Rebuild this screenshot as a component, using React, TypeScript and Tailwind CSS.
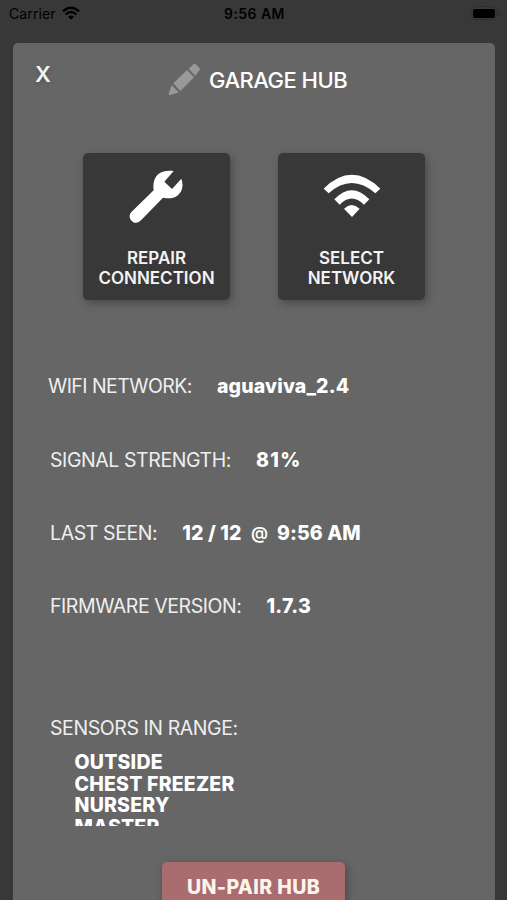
import type { ReactNode } from "react";

function StatusBar() {
  return (
    <header className="flex h-[27px] items-center justify-between pl-[9px] pr-[7px] text-[14px] leading-[18px] text-black">
      <div className="flex w-[180px] items-center gap-[6px]">
        <span className="tracking-[0.1px]">Carrier</span>
        <svg className="mt-[-2px] h-[14px] w-[18px]" viewBox="0 0 54 42" fill="none">
          <path d="M3 16Q27 -6 51 16" stroke="currentColor" strokeWidth="7" />
          <path d="M11 25Q27 11 43 25" stroke="currentColor" strokeWidth="6.5" />
          <path d="M18 32Q27 25 36 32L27 41Z" fill="currentColor" />
        </svg>
      </div>
      <span className="font-semibold tracking-[0.45px]">9:56 AM</span>
      <div className="flex w-[180px] items-center justify-end gap-[1px]">
        <div className="mt-[-1px] h-[14px] w-[27px] rounded-[4px] border border-[#303030] p-[1.5px]">
          <div className="h-full w-full rounded-[2px] bg-black" />
        </div>
        <div className="h-[5px] w-[2px] rounded-r bg-[#303030]" />
      </div>
    </header>
  );
}

function Tile({ icon, first, second }: { icon: ReactNode; first: string; second: string }) {
  return (
    <button className="flex h-[147px] w-[147px] flex-col items-center rounded-[5px] bg-[#383838] shadow-[2px_3px_8px_rgba(0,0,0,0.3)]">
      <span className="flex h-[94.5px] w-full justify-center">{icon}</span>
      <span className="text-[17px] font-semibold leading-[20.5px] text-[#f4f4f4]">
        {first}
        <br />
        {second}
      </span>
    </button>
  );
}

function Row({ label, children, className }: { label: string; children: ReactNode; className: string }) {
  return (
    <div className={`flex items-start gap-[25px] whitespace-pre text-[19.5px] leading-[24px] ${className}`}>
      <span className="text-[#efefef]">{label}</span>
      <span className="font-extrabold text-white">{children}</span>
    </div>
  );
}

export default function App() {
  return (
    <div className="h-[900px] w-[507px] overflow-hidden bg-[#383838] font-['Inter',sans-serif]">
      <StatusBar />
      <main className="ml-[13px] mt-[16px] h-[870px] w-[482px] rounded-t-[5px] bg-[#666666]">
        <div className="flex h-[110px] items-start">
          <button className="ml-[22px] mt-[16.5px] w-[16px] text-[22px] font-semibold leading-[28px] text-[#f2f2f2] [text-shadow:0_2px_4px_rgba(0,0,0,0.2)]">X</button>
          <div className="ml-[116.5px] mt-[20.5px] flex items-center">
            <svg className="mt-[-1px] h-[33px] w-[32px]" viewBox="0 0 96 99" fill="#999999">
              <path d="M11 66L32 88L6 97Q2 97 2 93Z" />
              <path d="M16 61L57 21L78 43L37 84Z" />
              <path d="M62 17L76 4Q80 0 85 5L94 14Q97 18 94 22L82 38Z" />
            </svg>
            <h1 className="ml-[9.5px] whitespace-nowrap text-[22px] font-medium leading-[28px] tracking-[-0.5px] text-white">GARAGE HUB</h1>
          </div>
        </div>
        <section className="ml-[70px] flex h-[220.5px] gap-[48px]">
          <Tile
            first="REPAIR"
            second="CONNECTION"
            icon={
              <svg className="mr-px mt-[16.5px] h-[54px] w-[54px]" viewBox="178 88 162 162" fill="white">
                <path d="M312 91L284 123L307 145L335 114C343 136 337 155 323 165C311 173 297 175 280 171L214 239C202 251 190 247 183 237C178 229 179 220 186 213L252 149C249 130 253 111 266 100C280 90 296 89 312 91Z" />
              </svg>
            }
          />
          <Tile
            first="SELECT"
            second="NETWORK"
            icon={
              <svg className="mt-[21px] h-[44px] w-[58px]" viewBox="189 102 174 132" fill="white">
                <path d="M191 146Q275 63 361 146L346 160Q275 98 206 160Z" />
                <path d="M223 178Q275 124 328 178L312 194Q275 157 239 194Z" />
                <path d="M252 206Q275 184 299 206L276 231Z" />
              </svg>
            }
          />
        </section>
        <section className="flex h-[342px] flex-col">
          <Row label="WIFI NETWORK:" className="h-[74px] pl-[35px] tracking-[-0.55px]">
            <span className="tracking-[0.17px]">aguaviva_2.4</span>
          </Row>
          <Row label="SIGNAL STRENGTH:" className="h-[73px] pl-[37px] tracking-[-0.42px]">
            <span className="tracking-[1.3px]">81%</span>
          </Row>
          <Row label="LAST SEEN:" className="h-[73px] pl-[37px] tracking-[-0.4px]">
            <span className="tracking-[0.1px]">12 / 12</span>
            <span className="relative -top-px mx-[9.5px] text-[17px] font-semibold">@</span>
            <span className="tracking-[0.1px]">9:56 AM</span>
          </Row>
          <Row label="FIRMWARE VERSION:" className="h-[73px] pl-[37px] tracking-[-0.44px]">
            <span className="tracking-[0.3px]">1.7.3</span>
          </Row>
        </section>
        <section className="h-[147px]">
          <h2 className="pl-[37px] text-[19.5px] leading-[24px] tracking-[-0.42px] text-[#efefef]">SENSORS IN RANGE:</h2>
          <ul className="mt-[12.5px] h-[73.5px] overflow-hidden pl-[61.5px] text-[19.5px] font-extrabold leading-[21.5px] tracking-[0.2px] text-white">
            <li>OUTSIDE</li>
            <li>CHEST FREEZER</li>
            <li>NURSERY</li>
            <li>MASTER</li>
          </ul>
        </section>
        <button className="ml-[149px] mt-[-0.5px] flex h-[51px] w-[183px] items-center justify-center rounded-[5px] bg-[#a96d70] text-[19.5px] font-extrabold tracking-[0.4px] text-[#fff4ed] shadow-[2px_3px_8px_rgba(0,0,0,0.3)]">UN-PAIR HUB</button>
      </main>
    </div>
  );
}
